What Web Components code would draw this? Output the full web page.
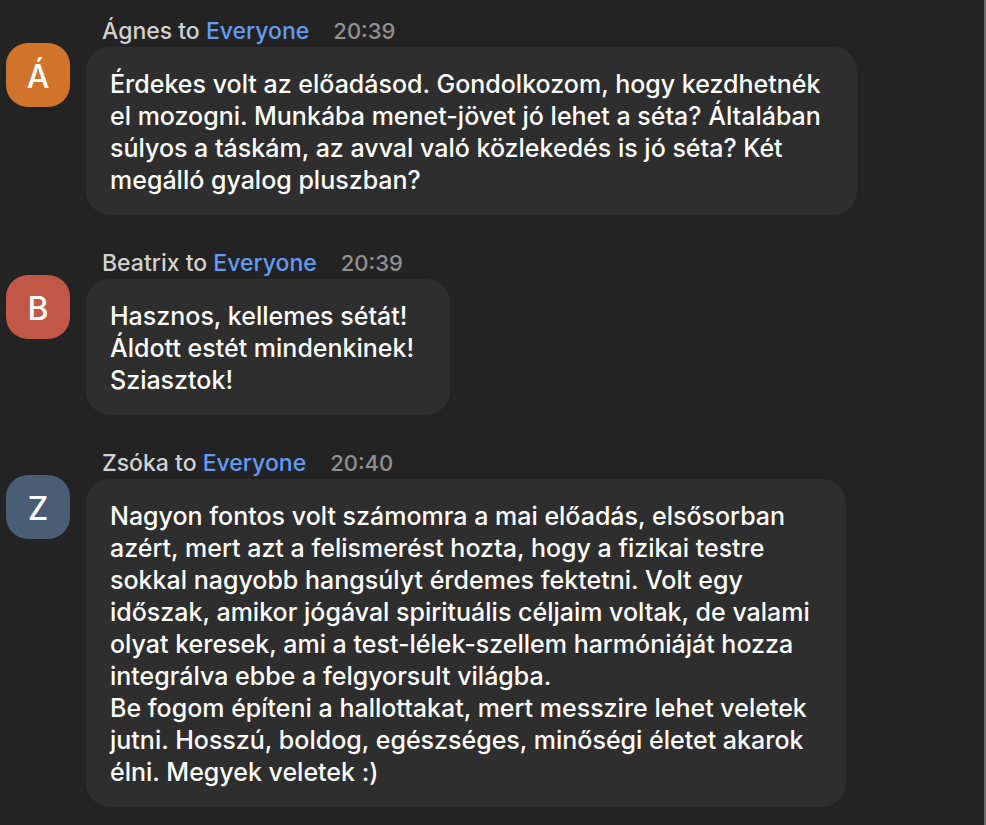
<!DOCTYPE html>
<html lang="hu">
<head>
<meta charset="utf-8">
<title>Chat</title>
<style>
html{background:#232323}
body{margin:0;min-height:100vh;box-sizing:border-box;border-right:2px solid #6b6b6b;font-family:Inter,"Liberation Sans",sans-serif;font-weight:500}
</style>
</head>
<body>
<chat-log>
<chat-message name="Ágnes" time="20:39" initial="Á" style="--avatar:#d1742b">Érdekes volt az előadásod. Gondolkozom, hogy kezdhetnék
el mozogni. Munkába menet-jövet jó lehet a séta? Általában
súlyos a táskám, az avval való közlekedés is jó séta? Két
megálló gyalog pluszban?</chat-message>
<chat-message name="Beatrix" time="20:39" initial="B" style="--avatar:#c15845">Hasznos, kellemes sétát!
Áldott estét mindenkinek!
Sziasztok!</chat-message>
<chat-message name="Zsóka" time="20:40" initial="Z" style="--avatar:#495d75">Nagyon fontos volt számomra a mai előadás, elsősorban
azért, mert azt a felismerést hozta, hogy a fizikai testre
sokkal nagyobb hangsúlyt érdemes fektetni. Volt egy
időszak, amikor jógával spirituális céljaim voltak, de valami
olyat keresek, ami a test-lélek-szellem harmóniáját hozza
integrálva ebbe a felgyorsult világba.
Be fogom építeni a hallottakat, mert messzire lehet veletek
jutni. Hosszú, boldog, egészséges, minőségi életet akarok
élni. Megyek veletek :)</chat-message>
</chat-log>
<script>
class ChatLog extends HTMLElement{
  constructor(){
    super();
    this.attachShadow({mode:'open'}).innerHTML=`<style>
:host{display:flex;flex-direction:column;gap:32px;padding:15px 16px 18px 6px}
</style><slot></slot>`;
  }
}
class ChatMessage extends HTMLElement{
  constructor(){
    super();
    this.attachShadow({mode:'open'}).innerHTML=`<style>
:host{display:grid;grid-template-columns:64px minmax(0,1fr);column-gap:16px}
.avatar{width:64px;height:64px;box-sizing:border-box;padding-top:2px;margin-top:28px;border-radius:22px;background:var(--avatar);color:#fff;font-size:32px;display:flex;align-items:center;justify-content:center}
header{display:flex;align-items:center;height:32px;padding-left:16px;font-size:23px;line-height:32px;color:#d2d2d2;white-space:pre}
a{color:#659bf2;text-decoration:none}
time{color:#919191;margin-left:24px;font-size:22px}
.bubble{width:fit-content;box-sizing:border-box;padding:21px 36px 19px 24px;border-radius:24px;background:#2e2e2e;color:#fff;font-size:25px;line-height:32px;white-space:pre-wrap}
</style>
<div class="avatar"></div>
<div><header><span class="name"></span> to <a href="#">Everyone</a><time></time></header><div class="bubble"><slot></slot></div></div>`;
    const $=s=>this.shadowRoot.querySelector(s);
    $('.avatar').textContent=this.getAttribute('initial');
    $('.name').textContent=this.getAttribute('name');
    $('time').textContent=this.getAttribute('time');
  }
}
customElements.define('chat-log',ChatLog);
customElements.define('chat-message',ChatMessage);
</script>
</body>
</html>
